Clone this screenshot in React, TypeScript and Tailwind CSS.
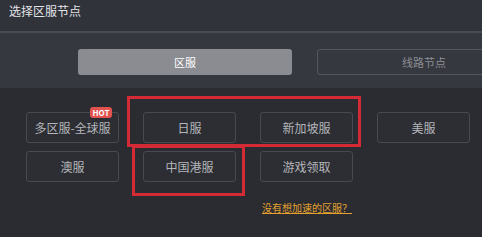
const regions = [
  { name: "多区服-全球服", hot: true },
  { name: "日服" },
  { name: "新加坡服" },
  { name: "美服" },
  { name: "澳服" },
  { name: "中国港服" },
  { name: "游戏领取" },
];

const RegionButton = ({ name, hot }: { name: string; hot?: boolean }) => (
  <div className="relative flex h-[31px] items-center justify-center rounded-[3px] border border-[#484a51] bg-[#2c2e34] text-[12px] text-[#b5b6ba]">
    {name}
    {hot && (
      <span className="absolute right-[6px] top-[-6px] flex h-[11px] w-[22px] items-center justify-center rounded-[3px] bg-[#e2524f] text-[8px] font-bold leading-none text-white">
        HOT
      </span>
    )}
  </div>
);

export default function App() {
  return (
    <div
      className="relative h-[237px] w-[482px] overflow-hidden bg-[#2a2c32]"
      style={{ fontFamily: '"Noto Sans CJK SC", "Noto Sans", sans-serif' }}
    >
      {/* Header */}
      <div className="flex h-[33px] items-start border-b-2 border-[#4a4c54] bg-[#31333b] px-[9px] pt-[3px]">
        <span className="text-[12px] leading-[16px] text-[#e4e5e8]">选择区服节点</span>
      </div>

      {/* Tabs */}
      <div className="flex h-[55px] gap-[25px] overflow-hidden bg-[#363840] pl-[78px] pt-[16px]">
        <div className="flex h-[26px] w-[214px] shrink-0 items-center justify-center rounded-[3px] bg-[#8b8c91] text-[11px] text-white">
          区服
        </div>
        <div className="flex h-[26px] w-[214px] shrink-0 items-center justify-center rounded-[3px] border border-[#55575e] text-[11px] text-[#8d8f95]">
          线路节点
        </div>
      </div>

      {/* Region list */}
      <div className="pl-[26px] pt-[24px]">
        <div className="grid grid-cols-[93px_93px_93px_93px] gap-x-[24px] gap-y-[8px]">
          {regions.map((r) => (
            <RegionButton key={r.name} name={r.name} hot={r.hot} />
          ))}
        </div>
        <div className="ml-[236px] mt-[19px] text-[10px] leading-[14px] text-[#e3a12f] underline">
          没有想加速的区服？
        </div>
      </div>

      {/* Annotation boxes */}
      <div className="absolute left-[127px] top-[96px] h-[51px] w-[234px] border-[3px] border-[#d32a35]" />
      <div className="absolute left-[132px] top-[145px] h-[51px] w-[113px] border-[3px] border-[#d32a35]" />
    </div>
  );
}
